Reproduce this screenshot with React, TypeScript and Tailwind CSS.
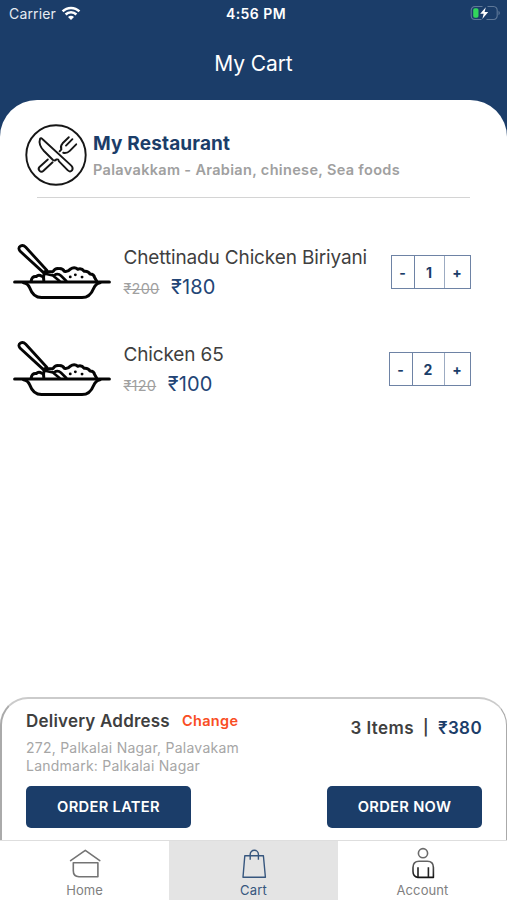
import React from "react";

const items = [
  { name: "Chettinadu Chicken Biriyani", old: "₹200", price: "₹180", qty: 1, count: "w-[30px]" },
  { name: "Chicken 65", old: "₹120", price: "₹100", qty: 2, count: "w-[32px]" },
];

function WifiIcon() {
  return (
    <svg className="relative -top-px" width="20" height="15" viewBox="0 0 20 15" fill="none" stroke="#fff" strokeWidth="2.5">
      <path d="M1.6 5.4C6.2.8 13.8.8 18.4 5.4" />
      <path d="M4.6 8.5C7.6 5.6 12.4 5.6 15.4 8.5" />
      <path d="M10 14L7 11c1.7-1.6 4.3-1.6 6 0z" fill="#fff" stroke="none" />
    </svg>
  );
}

function BatteryIcon() {
  return (
    <svg className="relative -top-px" width="31" height="16" viewBox="0 0 31 16" fill="none">
      <path d="M12.5 1.5H5A4 4 0 0 0 1.2 5.3v5.4A4 4 0 0 0 5 14.5h6.5M17.5 1.5h6a4 4 0 0 1 3.7 3.8v5.4a4 4 0 0 1-3.7 3.8h-7" stroke="#5f7898" strokeWidth="1.1" />
      <path d="M28.5 5.8c1.8.8 1.8 3.6 0 4.4z" fill="#5f7898" />
      <rect x="3.2" y="3.3" width="5.3" height="9.4" rx="1.8" fill="#32d75b" />
      <path d="M15.8 2.2L10.2 8.7h3.5l-1.4 5.2 5.9-7h-3.6z" fill="#fff" />
    </svg>
  );
}

function RestaurantIcon() {
  return (
    <svg className="shrink-0" width="62" height="62" viewBox="0 0 62 62" fill="none" stroke="#161616" strokeWidth="1.9" strokeLinecap="round" strokeLinejoin="round">
      <circle cx="31" cy="31" r="29.7" />
      <path d="M15.1 14.6C13.6 19 15.8 23.6 19 27L28 36Q29.8 37.2 31.3 35.5Q33.6 34.8 33.8 37.2L42.6 46.2Q45 48.6 47 46.4Q48.6 44 46.3 41.6L17.6 15.2Q16 13.6 15.1 14.6Z" />
      <path d="M22.8 35.5L14.5 43Q12.7 45 14.6 46.8Q16.4 48.6 18.5 46.8L27.6 38.3" />
      <path d="M34.6 27.3L36.4 25.3Q34.9 22.2 37.6 19.3L43.8 13.2M41 21.6L47.4 15.2M38.2 28.8Q42 29.6 44.8 26.8L51.2 20.3" />
    </svg>
  );
}

function BowlIcon() {
  return (
    <svg width="98" height="56" viewBox="0 0 98 56" fill="none" stroke="#050505" strokeWidth="3" strokeLinecap="round" strokeLinejoin="round">
      <path d="M1.6 37.9H96.4" strokeWidth="3" />
      <path d="M10.5 38.7Q15 39.3 16.8 44Q20.2 53.6 28.5 53.6H69Q77 53.6 80.6 44.5Q82.6 39.5 87 38.7" />
      <path d="M30.5 28.6L7.2 7.3Q4.4 3.9 7.6 2Q10.2.6 12.8 3.3L33.8 26.2Z" strokeWidth="2.8" />
      <path d="M18.2 37Q18.8 32 23.2 32.6Q25.5 30.3 28.8 32.2" />
      <path d="M30.8 36.5Q29.2 28.8 35 27.8L40 27.6Q42.2 23.6 46.5 24.6Q50 24.6 51.3 27.3Q55 28 57.2 25.3Q61.2 22.4 64.8 25.2Q68.8 23.9 71 27.2Q75.3 26.7 77 30Q81 30 81.6 33.5L83.6 37" />
      <path d="M39.3 31L46.5 37M41 31.4Q44.8 28.8 48 31.8L53.3 37M31 29.5L40 31.5" strokeWidth="2.6" />
      <path d="M57.2 32.9h.1M62.3 30.8h.1M69 33.1h.1" strokeWidth="2.8" />
    </svg>
  );
}

function HomeIcon() {
  return (
    <svg width="32" height="32" viewBox="0 0 32 32" fill="none" stroke="#747474" strokeWidth="1.6" strokeLinejoin="round" strokeLinecap="round">
      <path d="M1.6 13.6L16.3 3.4l14.5 10.2M4.3 15.8h24.6v14H10Q4.3 29.6 4.3 23.8z" />
    </svg>
  );
}

function BagIcon() {
  return (
    <svg width="32" height="32" viewBox="0 0 32 32" fill="none" stroke="#36567e" strokeWidth="1.4" strokeLinejoin="round">
      <path d="M6.8 8.8h18.6l2 21.4H5zM12.2 12.8V7.3a4.1 4.1 0 0 1 8.2 0v5.5" />
    </svg>
  );
}

function PersonIcon() {
  return (
    <svg width="32" height="32" viewBox="0 0 32 32" fill="none" strokeWidth="1.6" strokeLinejoin="round">
      <defs>
        <linearGradient id="body" x1="0" y1="0" x2="0" y2="1">
          <stop stopColor="#666" />
          <stop offset="1" stopColor="#151515" />
        </linearGradient>
      </defs>
      <circle cx="16" cy="6.2" r="4.6" stroke="#6b6b6b" />
      <path d="M10.9 30.4Q6 29.4 6 24.4V20.5Q6 14.2 12 14.2h8.4q6 0 6 6.3v9.9z" stroke="url(#body)" />
      <path d="M11 20.3v10M21.4 20.3v10" stroke="#222" />
    </svg>
  );
}

export default function App() {
  return (
    <main className="flex h-[900px] w-[507px] flex-col overflow-hidden bg-white font-['Inter','Open_Sans',sans-serif] text-[#3f3f3f]">
      <div className="bg-[#1b3d69]">
        <header className="h-[100px] text-white">
          <div className="flex h-7 items-center justify-between pr-[6px] pl-[9px]">
            <div className="flex flex-1 items-center gap-[5px] text-[14px] leading-5 tracking-[0.15px] text-[#e6ebf2]">
              <span className="-mt-px">Carrier</span>
              <WifiIcon />
            </div>
            <span className="mr-[-2px] text-center text-[14px] leading-5 font-semibold tracking-[0.45px]">4:56 PM</span>
            <div className="flex flex-1 justify-end">
              <BatteryIcon />
            </div>
          </div>
          <h1 className="pt-[21px] text-center text-[21px] leading-[30px] tracking-[-0.1px]">My Cart</h1>
        </header>
        <section className="h-[98px] rounded-t-[37px] bg-white pt-6 pl-[25px]">
          <div className="flex h-[62px] gap-[6px]">
            <RestaurantIcon />
            <div className="pt-2">
              <h2 className="text-[19px] leading-6 font-bold tracking-[0.15px] whitespace-nowrap text-[#1b3d69]">My Restaurant</h2>
              <p className="mt-1 text-[14.5px] leading-5 font-semibold tracking-[0.33px] whitespace-nowrap text-[#a0a0a0]">Palavakkam - Arabian, chinese, Sea foods</p>
            </div>
          </div>
          <div className="mt-[11px] ml-3 h-px w-[433px] bg-[#d4d4d4]" />
        </section>
      </div>

      <section className="flex-1 pt-[46px]">
        {items.map((item) => (
          <article key={item.name} className="flex h-[97.4px] pr-[36.5px] pl-[13px]">
            <BowlIcon />
            <div className="ml-[12.5px] pt-px">
              <h3 className="text-[19px] leading-[26px] tracking-[-0.14px] whitespace-nowrap">{item.name}</h3>
              <div className="mt-[2px] flex items-baseline gap-[11.5px] leading-7">
                <span className="text-[14.5px] tracking-[0.25px] text-[#a0a0a0] line-through">{item.old}</span>
                <span className="text-[20px] tracking-[0.1px] text-[#234576]">{item.price}</span>
              </div>
            </div>
            <div className="mt-[11px] ml-auto flex h-[34px] border border-[#6e83a5] text-[14px] font-bold text-[#1b3d69]">
              <button className="w-[23px] border-r border-[#6e83a5]">-</button>
              <span className={`${item.count} flex items-center justify-center border-r border-[#9cabc2]`}>{item.qty}</span>
              <button className="w-[25px]">+</button>
            </div>
          </article>
        ))}
      </section>

      <section className="h-[143px] rounded-t-[28px] border-t-2 border-r border-l-2 border-t-[#cbcbcb] border-r-[#aaa] border-l-[#aaa] px-6 pt-[10px]">
        <div className="flex justify-between">
          <div>
            <div className="flex items-center gap-[12px] pt-px leading-[22px] whitespace-nowrap">
              <h2 className="text-[17px] font-semibold tracking-[0.2px]">Delivery Address</h2>
              <button className="text-[14.5px] font-semibold tracking-[0.35px] text-[#f94d23]">Change</button>
            </div>
            <p className="mt-[7px] text-[14px] leading-[17.5px] tracking-[0.24px] whitespace-nowrap text-[#a6a6a6]">
              272, Palkalai Nagar, Palavakam
              <br />
              Landmark: Palkalai Nagar
            </p>
          </div>
          <div className="mt-[8px] flex gap-[9px] text-[17px] leading-[22px] font-semibold tracking-[0.4px] whitespace-nowrap">
            <span>3 Items</span>
            <span className="text-[15.5px]">|</span>
            <span className="text-[#1b3d69]">₹380</span>
          </div>
        </div>
        <div className="mt-[12px] flex justify-between text-[14.7px] font-semibold tracking-[0.3px] text-white">
          <button className="h-[42px] w-[165px] rounded-[5px] bg-[#1b3d69] pt-px">ORDER LATER</button>
          <button className="h-[42px] w-[155px] rounded-[5px] bg-[#1b3d69] pt-px">ORDER NOW</button>
        </div>
      </section>

      <nav className="grid h-[60px] grid-cols-3 border-t border-[#dedede] text-[13px] text-[#808080]">
        <a className="flex flex-col items-center pt-[6px]">
          <HomeIcon />
          <span className="mt-[2px] leading-[18px]">Home</span>
        </a>
        <a className="flex flex-col items-center bg-[#e4e4e4] pt-[6px] text-[#36567e]">
          <BagIcon />
          <span className="mt-[2px] leading-[18px] tracking-[0.2px]">Cart</span>
        </a>
        <a className="flex flex-col items-center pt-[6px]">
          <PersonIcon />
          <span className="mt-[2px] leading-[18px] tracking-[0.1px]">Account</span>
        </a>
      </nav>
    </main>
  );
}
